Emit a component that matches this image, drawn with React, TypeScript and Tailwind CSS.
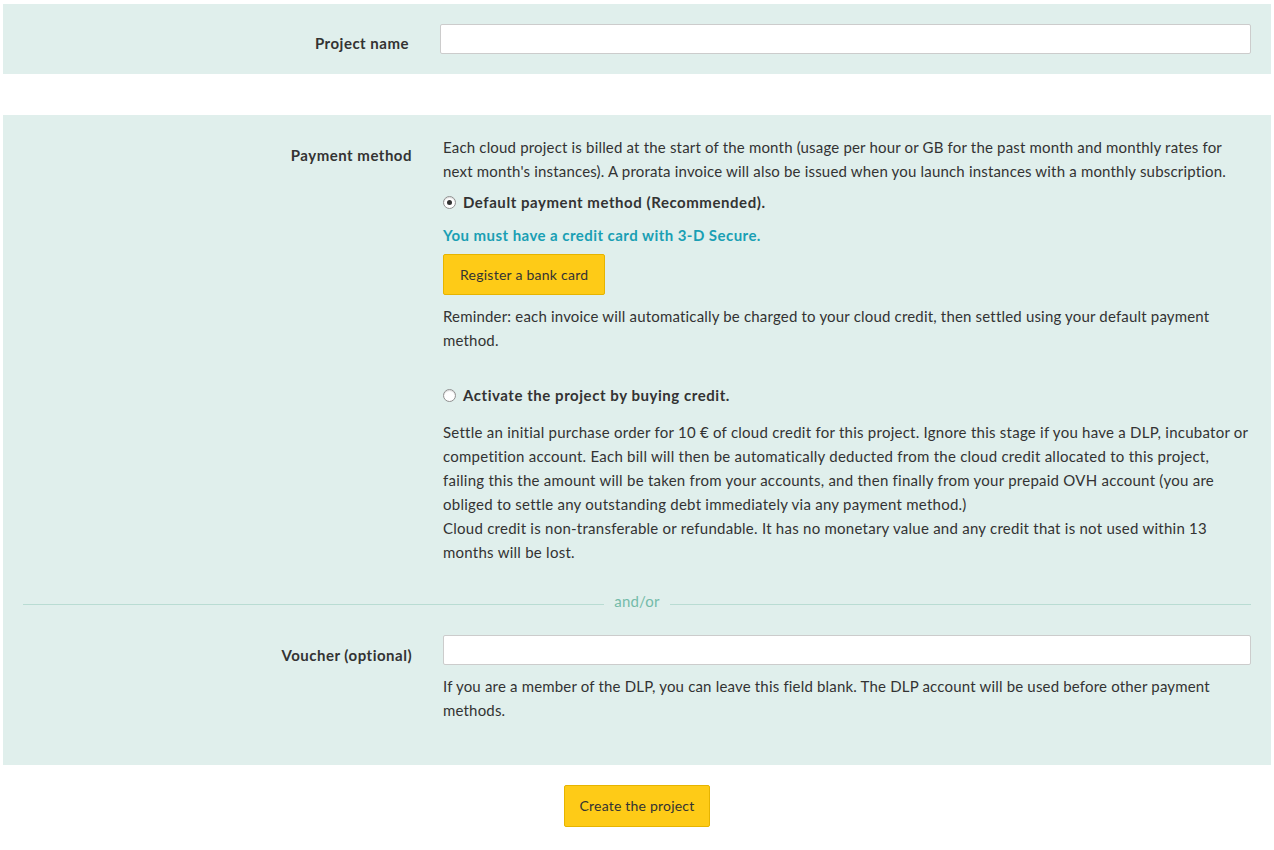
import { useState } from 'react'

function Radio({ checked, onClick, label }: { checked: boolean; onClick: () => void; label: string }) {
  return (
    <label className="flex items-center h-6 cursor-pointer" onClick={onClick}>
      <span className="w-[13px] h-[13px] rounded-full border border-[#8f8f8f] bg-white flex items-center justify-center shadow-[inset_0_1px_1px_rgba(0,0,0,0.15)]">
        {checked && <span className="w-[5px] h-[5px] rounded-full bg-[#333]" />}
      </span>
      <span className="ml-[7px] font-bold tracking-[0.55px]">{label}</span>
    </label>
  )
}

export default function App() {
  const [method, setMethod] = useState<'default' | 'credit'>('default')

  return (
    <div className="px-[3px] pt-[4px] pb-6 text-[15px] leading-6 tracking-[0.18px] text-[#333] bg-white min-h-[850px]" style={{ fontFamily: 'Lato, "Liberation Sans", sans-serif' }}>
      {/* project name */}
      <div className="bg-[#e0efec] h-[70px] flex items-center pr-[20px]">
        <div className="w-[406px] text-right font-bold tracking-[0.5px] pt-[7px]">Project name</div>
        <input className="ml-[31px] flex-1 h-[30px] bg-white border border-[#ccc] rounded-[2px] px-2 outline-none" />
      </div>

      {/* payment */}
      <div className="mt-[41px] bg-[#e0efec] px-[20px] pt-[20px] pb-[43px]">
        <div className="flex">
          <div className="w-[389px] shrink-0 text-right font-bold tracking-[0.5px] pt-[8px]">Payment method</div>
          <div className="ml-[31px] flex-1">
            <p>
              Each cloud project is billed at the start of the month (usage per hour or GB for the past month and monthly rates for next month's instances). A prorata invoice will also be issued when you launch instances with a monthly subscription.
            </p>
            <div className="mt-[7px]">
              <Radio checked={method === 'default'} onClick={() => setMethod('default')} label="Default payment method (Recommended)." />
            </div>
            <p className="mt-[9px] font-bold tracking-[0.45px] text-[#1a9fb4]">You must have a credit card with 3-D Secure.</p>
            <button className="mt-[7px] h-[41px] px-4 bg-[#fecb17] border border-[#e6b400] rounded-[2px] text-[14px] tracking-[0.25px]">Register a bank card</button>
            <p className="mt-[9px]">
              Reminder: each invoice will automatically be charged to your cloud credit, then settled using your default payment method.
            </p>
            <div className="mt-[31px]">
              <Radio checked={method === 'credit'} onClick={() => setMethod('credit')} label="Activate the project by buying credit." />
            </div>
            <p className="mt-[13px] tracking-[0.25px]">
              Settle an initial purchase order for 10 € of cloud credit for this project. Ignore this stage if you have a DLP, incubator or competition account. Each bill will then be automatically deducted from the cloud credit allocated to this project, failing this the amount will be taken from your accounts, and then finally from your prepaid OVH account (you are obliged to settle any outstanding debt immediately via any payment method.)
              <br />
              Cloud credit is non-transferable or refundable. It has no monetary value and any credit that is not used within 13 months will be lost.
            </p>
          </div>
        </div>

        <div className="mt-[32px] flex items-center gap-[10px] text-[#74bba9]">
          <div className="flex-1 h-px bg-[#b9dcd3]" />
          <span className="-mt-[7px]">and/or</span>
          <div className="flex-1 h-px bg-[#b9dcd3]" />
        </div>

        <div className="mt-[22px] flex">
          <div className="w-[389px] shrink-0 text-right font-bold tracking-[0.5px] pt-[8px]">Voucher (optional)</div>
          <div className="ml-[31px] flex-1">
            <input className="w-full h-[30px] bg-white border border-[#ccc] rounded-[2px] px-2 outline-none" />
            <p className="mt-[9px]">
              If you are a member of the DLP, you can leave this field blank. The DLP account will be used before other payment methods.
            </p>
          </div>
        </div>
      </div>

      <div className="mt-[20px] flex justify-center">
        <button className="h-[42px] px-[15px] bg-[#fecb17] border border-[#e6b400] rounded-[2px] text-[14px] tracking-[0.2px]">Create the project</button>
      </div>
    </div>
  )
}
